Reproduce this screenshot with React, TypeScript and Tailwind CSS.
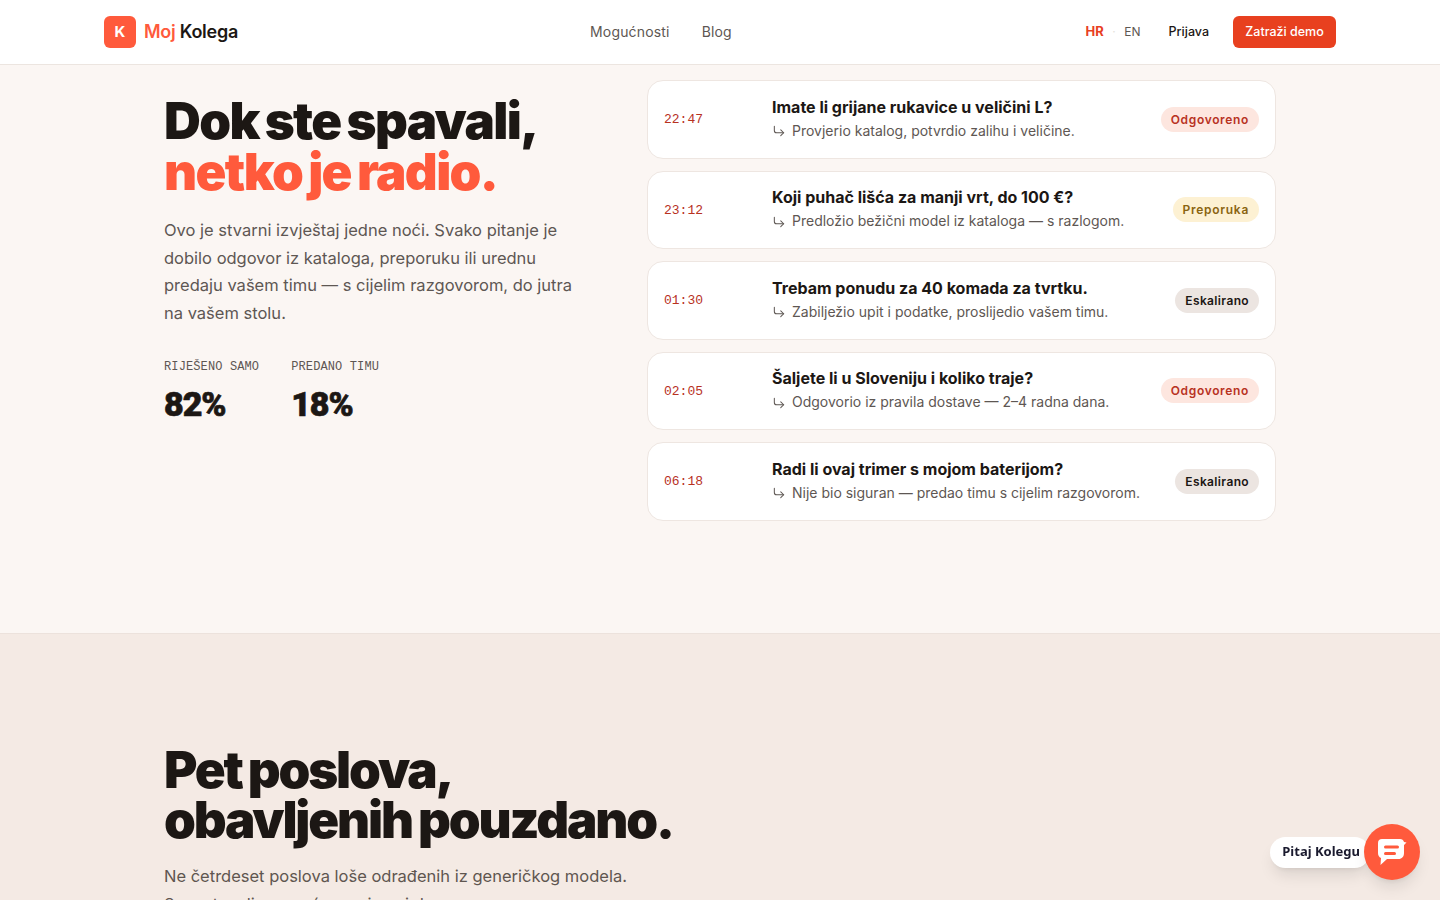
import React from 'react';
import { CornerDownRight } from 'lucide-react';

const sans = { fontFamily: 'Inter, "Noto Sans", sans-serif' };

type Tone = 'done' | 'tip' | 'esc';

const rows: { time: string; title: string; note: string; status: string; tone: Tone }[] = [
    { time: '22:47', title: 'Imate li grijane rukavice u veličini L?', note: 'Provjerio katalog, potvrdio zalihu i veličine.', status: 'Odgovoreno', tone: 'done' },
    { time: '23:12', title: 'Koji puhač lišća za manji vrt, do 100 €?', note: 'Predložio bežični model iz kataloga — s razlogom.', status: 'Preporuka', tone: 'tip' },
    { time: '01:30', title: 'Trebam ponudu za 40 komada za tvrtku.', note: 'Zabilježio upit i podatke, proslijedio vašem timu.', status: 'Eskalirano', tone: 'esc' },
    { time: '02:05', title: 'Šaljete li u Sloveniju i koliko traje?', note: 'Odgovorio iz pravila dostave — 2–4 radna dana.', status: 'Odgovoreno', tone: 'done' },
    { time: '06:18', title: 'Radi li ovaj trimer s mojom baterijom?', note: 'Nije bio siguran — predao timu s cijelim razgovorom.', status: 'Eskalirano', tone: 'esc' },
];

const toneClass: Record<Tone, string> = {
    done: 'bg-[#fde6df] text-[#b8321f] tracking-[0.055em]',
    tip: 'bg-[#fdf1d3] text-[#8a6410] tracking-[0.06em]',
    esc: 'bg-[#ece5e1] text-[#1c1714] tracking-[0.03em]',
};

const Row = ({ time, title, note, status, tone }: (typeof rows)[number]) => (
    <div className="flex h-[78.5px] items-center rounded-2xl border border-[#eee6e1] bg-white px-4">
        <div className="w-[108px] shrink-0 pt-px text-[13px] font-medium text-[#b8321f]" style={{ fontFamily: '"Liberation Mono", monospace' }}>{time}</div>
        <div className="min-w-0 flex-1">
            <div className="text-base leading-[22px] font-bold text-[#1c1714]">{title}</div>
            <div className="flex items-center text-sm leading-[25px] text-[#5e5753]">
                <CornerDownRight className="mt-[2px] mr-[6px] h-[14px] w-[14px] shrink-0 text-[#5e5753]" strokeWidth={1.75} />
                <span>{note}</span>
            </div>
        </div>
        <span className={`shrink-0 rounded-full px-[10px] py-[4px] text-xs leading-[17px] font-semibold ${toneClass[tone]}`}>{status}</span>
    </div>
);

const Stat = ({ label, value }: { label: string; value: string }) => (
    <div>
        <div className="text-xs leading-4 tracking-[0.01em] text-[#5e5753]" style={{ fontFamily: '"Liberation Mono", monospace' }}>{label}</div>
        <div className="mt-2 text-[34px] leading-[42px] font-black tracking-[-0.03em] text-[#1c1714] [-webkit-text-stroke:0.7px_#1c1714]" style={{ fontFamily: 'Roboto, sans-serif' }}>{value}</div>
    </div>
);

export default function App() {
    return (
        <div className="relative h-screen overflow-hidden bg-[#fbf6f3]" style={sans}>
            <header className="h-[65px] border-b border-[#ece5e0] bg-white">
                <div className="mx-auto flex h-16 w-[1232px] items-center">
                    <div className="flex w-[486px] items-center gap-[8px]">
                        <div className="flex h-8 w-8 items-center justify-center rounded-md bg-[#ff5a3c] text-[15px] font-bold text-white">K</div>
                        <div className="text-lg font-semibold tracking-[-0.015em] text-[#1c1714]"><span className="text-[#ff5a3c]">Moj</span> Kolega</div>
                    </div>
                    <nav className="flex items-center gap-8 text-sm tracking-[0.012em] text-[#5e5753]">
                        <span>Mogućnosti</span>
                        <span>Blog</span>
                    </nav>
                    <div className="ml-auto flex items-center">
                        <span className="text-[13px] font-bold text-[#e8401f]">HR</span>
                        <span className="mx-[8.5px] text-xs text-[#e5dfdb]">·</span>
                        <span className="text-xs text-[#5e5753]">EN</span>
                        <span className="ml-7 text-[12.5px] font-medium text-[#1c1714]">Prijava</span>
                        <span className="ml-6 flex h-8 w-[103px] items-center justify-center rounded-md bg-[#e8401f] text-[12.5px] font-medium text-white">Zatraži demo</span>
                    </div>
                </div>
            </header>

            <section className="h-[568px]">
                <div className="mx-auto flex w-[1112px] justify-between">
                    <div className="w-[420px] pt-[30px]">
                        <h1 className="text-[51px] leading-[51px] font-black tracking-[-0.032em] [word-spacing:-0.05em] text-[#1c1714]">
                            Dok ste spavali,<br /><span className="text-[#ff5a3c]">netko je radio.</span>
                        </h1>
                        <p className="mt-5 text-[16.5px] leading-[27.5px] text-[#5e5753]">
                            Ovo je stvarni izvještaj jedne noći. Svako pitanje je dobilo odgovor iz kataloga, preporuku ili urednu predaju vašem timu — s cijelim razgovorom, do jutra na vašem stolu.
                        </p>
                        <div className="mt-8 flex gap-8">
                            <Stat label="RIJEŠENO SAMO" value="82%" />
                            <Stat label="PREDANO TIMU" value="18%" />
                        </div>
                    </div>
                    <div className="flex w-[629px] flex-col gap-3 pt-[15px]">
                        {rows.map(r => <Row key={r.time} {...r} />)}
                    </div>
                </div>
            </section>

            <section className="h-[267px] border-t border-[#ece2dc] bg-[#f4eae4]">
                <div className="mx-auto w-[1112px] pt-[111px]">
                    <h2 className="text-[51px] leading-[50px] font-black tracking-[-0.042em] [word-spacing:-0.04em] text-[#1c1714]">
                        Pet poslova,<br />obavljenih pouzdano.
                    </h2>
                    <p className="mt-[17px] text-[16.5px] leading-[28px] text-[#5f5650]">
                        Ne četrdeset poslova loše odrađenih iz generičkog modela.<br />Samo to, ali sve noćne smjene i dane.
                    </p>
                </div>
            </section>

            <div className="fixed right-5 bottom-5 flex items-center">
                <div className="-mr-[6px] flex h-[31px] items-center rounded-full bg-white pr-[10px] pl-3 text-[13px] font-bold text-[#1a1a2e] shadow-lg" style={{ fontFamily: '"Noto Sans", sans-serif' }}>Pitaj Kolegu</div>
                <div className="relative flex h-14 w-14 items-center justify-center rounded-full bg-[#ff5a3c] shadow-lg">
                    <svg width="30" height="28" viewBox="0 0 30 28">
                        <path d="M5 1h18c2 0 3.500 1 4 3l2.500.5L27 7v8c0 3.500-2 6-5.500 6H10l-6.500 6 .5-7C2 19 1 17.500 1 15V5c0-2.500 1.500-4 4-4z" fill="#fff" />
                        <rect x="7" y="7.500" width="15" height="3" rx="1.500" fill="#ff5a3c" />
                        <rect x="7" y="14" width="12" height="3" rx="1.500" fill="#ff5a3c" />
                    </svg>
                </div>
            </div>
        </div>
    );
}
